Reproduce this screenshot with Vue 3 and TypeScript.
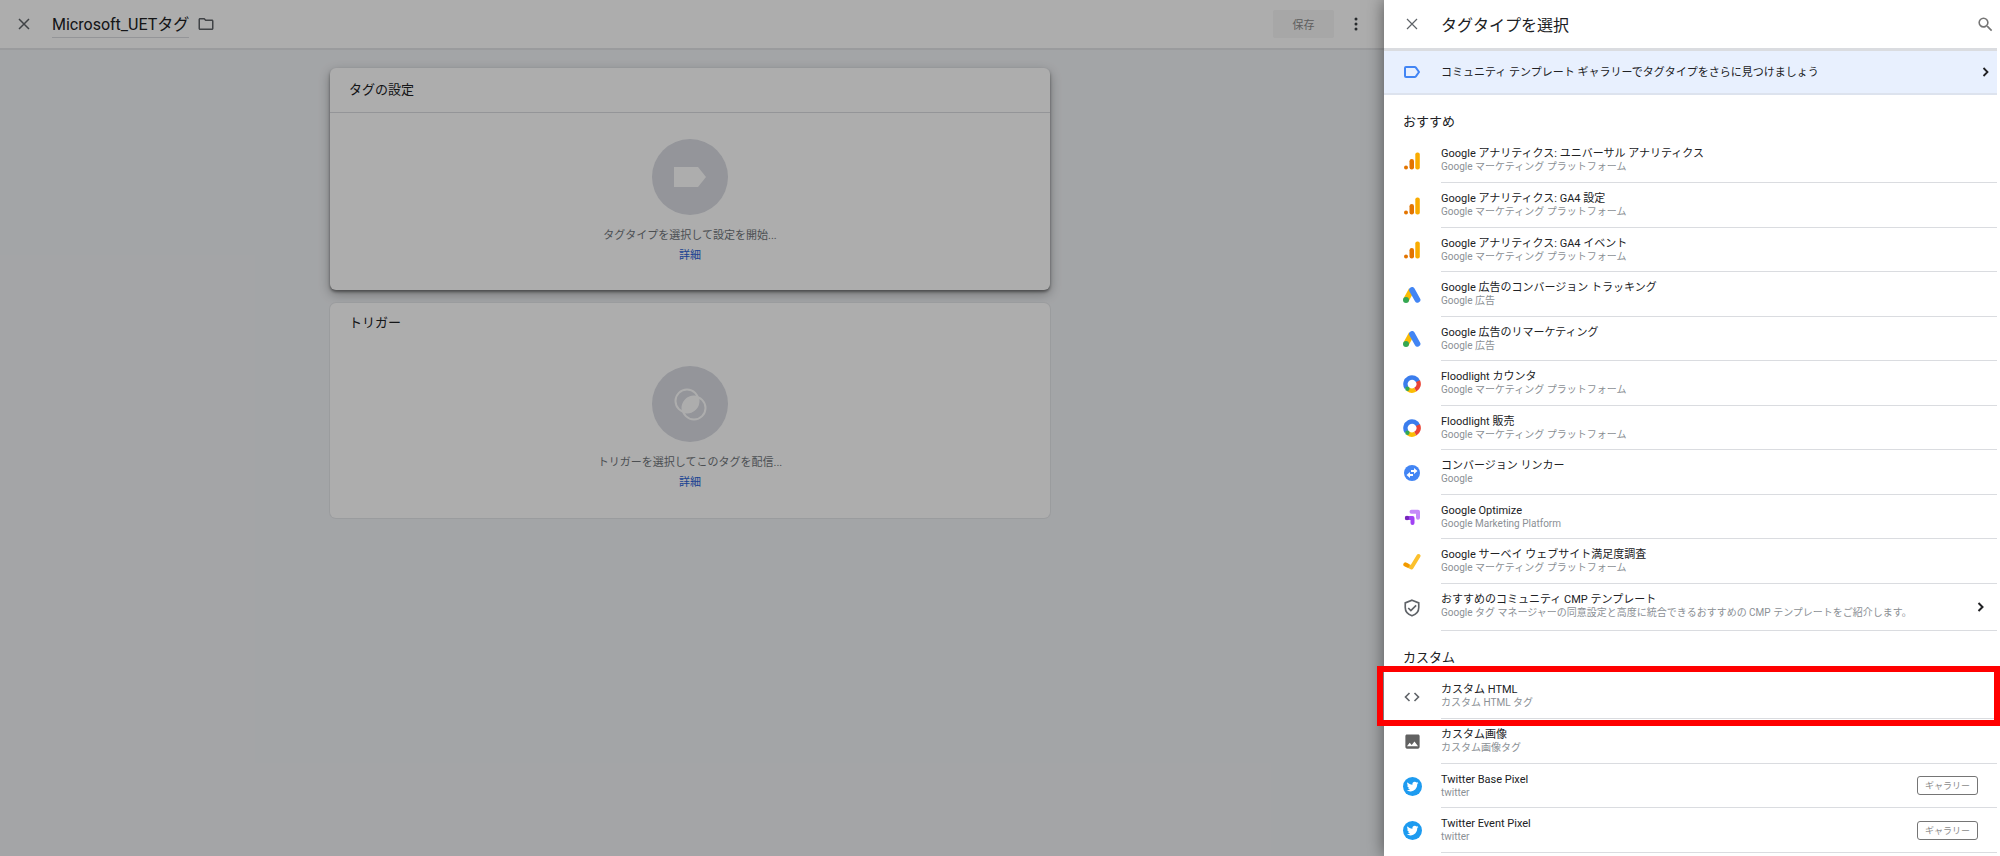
<script setup lang="ts">
import { ref } from 'vue'

type IconName =
  | 'analytics' | 'ads' | 'floodlight' | 'linker' | 'optimize' | 'survey'
  | 'shield' | 'code' | 'image' | 'twitter'

interface TagType {
  icon: IconName
  title: string
  vendor: string
  arrow?: boolean
  gallery?: boolean
  highlighted?: boolean
}

interface Section {
  heading: string
  items: TagType[]
}

const gmp = 'Google マーケティング プラットフォーム'
const tagName = ref('Microsoft_UETタグ')

const sections: Section[] = [
  {
    heading: 'おすすめ',
    items: [
      { icon: 'analytics', title: 'Google アナリティクス: ユニバーサル アナリティクス', vendor: gmp },
      { icon: 'analytics', title: 'Google アナリティクス: GA4 設定', vendor: gmp },
      { icon: 'analytics', title: 'Google アナリティクス: GA4 イベント', vendor: gmp },
      { icon: 'ads', title: 'Google 広告のコンバージョン トラッキング', vendor: 'Google 広告' },
      { icon: 'ads', title: 'Google 広告のリマーケティング', vendor: 'Google 広告' },
      { icon: 'floodlight', title: 'Floodlight カウンタ', vendor: gmp },
      { icon: 'floodlight', title: 'Floodlight 販売', vendor: gmp },
      { icon: 'linker', title: 'コンバージョン リンカー', vendor: 'Google' },
      { icon: 'optimize', title: 'Google Optimize', vendor: 'Google Marketing Platform' },
      { icon: 'survey', title: 'Google サーベイ ウェブサイト満足度調査', vendor: gmp },
      {
        icon: 'shield',
        title: 'おすすめのコミュニティ CMP テンプレート',
        vendor: 'Google タグ マネージャーの同意設定と高度に統合できるおすすめの CMP テンプレートをご紹介します。',
        arrow: true,
      },
    ],
  },
  {
    heading: 'カスタム',
    items: [
      { icon: 'code', title: 'カスタム HTML', vendor: 'カスタム HTML タグ', highlighted: true },
      { icon: 'image', title: 'カスタム画像', vendor: 'カスタム画像タグ' },
      { icon: 'twitter', title: 'Twitter Base Pixel', vendor: 'twitter', gallery: true },
      { icon: 'twitter', title: 'Twitter Event Pixel', vendor: 'twitter', gallery: true },
    ],
  },
]
</script>

<template>
  <div class="app">
    <div class="editor">
      <header class="topbar">
        <button class="icon-btn" type="button" aria-label="閉じる">
          <svg width="12" height="12" viewBox="0 0 12 12"><path d="M1 1l10 10M11 1L1 11" stroke="#5f6368" stroke-width="1.5" /></svg>
        </button>
        <input v-model="tagName" class="tag-name" type="text" aria-label="タグ名" />
        <button class="icon-btn" type="button" aria-label="フォルダ">
          <svg width="18" height="18" viewBox="0 0 24 24"><path fill="#5f6368" d="M9.17 6l2 2H20v10H4V6h5.17M10 4H4c-1.1 0-2 .9-2 2v12c0 1.1.9 2 2 2h16c1.1 0 2-.9 2-2V8c0-1.1-.9-2-2-2h-8l-2-2z" /></svg>
        </button>
        <span class="spacer" />
        <button class="save" type="button" disabled>保存</button>
        <button class="icon-btn" type="button" aria-label="その他">
          <svg width="4" height="14" viewBox="0 0 4 14" fill="#3c4043"><circle cx="2" cy="2" r="1.5" /><circle cx="2" cy="7" r="1.5" /><circle cx="2" cy="12" r="1.5" /></svg>
        </button>
      </header>

      <main class="cards">
        <section class="card raised">
          <h2 class="card-title ruled">タグの設定</h2>
          <div class="card-body">
            <span class="disc">
              <svg width="34" height="20" viewBox="0 0 34 20"><path d="M1 0h24l8 10-8 10H1z" fill="#fff" /></svg>
            </span>
            <p>タグタイプを選択して設定を開始...</p>
            <a href="#">詳細</a>
          </div>
        </section>
        <section class="card">
          <h2 class="card-title">トリガー</h2>
          <div class="card-body">
            <span class="disc">
              <svg width="33" height="33" viewBox="0 0 33 33">
                <circle cx="13" cy="13" r="11.5" fill="none" stroke="#fff" stroke-width="2" />
                <circle cx="20" cy="20" r="11.5" fill="none" stroke="#fff" stroke-width="2" />
                <path d="M8.800 24.200A12 12 0 0 1 24.200 8.800A12 12 0 0 1 8.800 24.200z" fill="#fff" />
              </svg>
            </span>
            <p>トリガーを選択してこのタグを配信...</p>
            <a href="#">詳細</a>
          </div>
        </section>
      </main>
      <div class="scrim" />
    </div>

    <aside class="panel">
      <header class="panel-head">
        <button class="icon-btn lead" type="button" aria-label="閉じる">
          <svg width="12" height="12" viewBox="0 0 12 12"><path d="M1 1l10 10M11 1L1 11" stroke="#5f6368" stroke-width="1.2" /></svg>
        </button>
        <h1>タグタイプを選択</h1>
        <button class="icon-btn search" type="button" aria-label="検索">
          <svg width="19" height="19" viewBox="0 0 24 24"><path fill="#757575" d="M15.5 14h-.79l-.28-.27A6.47 6.47 0 0 0 16 9.5 6.5 6.5 0 1 0 9.5 16c1.61 0 3.09-.59 4.23-1.57l.27.28v.79l5 4.99L20.49 19l-4.99-5zm-6 0C7.01 14 5 11.99 5 9.5S7.01 5 9.5 5 14 7.01 14 9.5 11.99 14 9.5 14z" /></svg>
        </button>
      </header>

      <button class="promo" type="button">
        <span class="lead">
          <svg width="16" height="12" viewBox="0 0 16 12"><path d="M2 1h8.600q.8 0 1.300.6L15 6l-3.100 4.400q-.5.6-1.300.6H2q-1 0-1-1V2q0-1 1-1z" fill="none" stroke="#4285f4" stroke-width="2" /></svg>
        </span>
        <span class="promo-text">コミュニティ テンプレート ギャラリーでタグタイプをさらに見つけましょう</span>
        <svg class="promo-arrow" width="8" height="10" viewBox="0 0 8 10"><path d="M1.500 1l4 4-4 4" fill="none" stroke="#202124" stroke-width="1.800" /></svg>
      </button>

      <section v-for="section in sections" :key="section.heading">
        <h2 class="section-title">{{ section.heading }}</h2>
        <ul class="types">
          <li v-for="item in section.items" :key="item.title" :class="{ wide: item.arrow }">
            <button class="type" type="button">
              <span class="lead">
                <svg v-if="item.icon === 'analytics'" width="16" height="18" viewBox="0 0 16 18">
                  <circle cx="2" cy="15.500" r="2" fill="#e37400" />
                  <rect x="5.500" y="7" width="4.500" height="10.500" rx="2.200" fill="#e37400" />
                  <rect x="11.300" y="0.500" width="4.500" height="17" rx="2" fill="#f9ab00" />
                </svg>
                <svg v-else-if="item.icon === 'ads'" width="18" height="16" viewBox="0 0 18 16">
                  <path d="M3 13L8.500 3" stroke="#fbbc04" stroke-width="5.800" />
                  <path d="M9 3l5.500 9.800" stroke="#4285f4" stroke-width="5.800" stroke-linecap="round" />
                  <circle cx="3" cy="13" r="3" fill="#34a853" />
                </svg>
                <svg v-else-if="item.icon === 'floodlight'" width="18" height="18" viewBox="0 0 18 18" fill="none" stroke-width="4.400">
                  <path d="M12.300 14.700A6.600 6.600 0 0 1 5 14.200" stroke="#fbbc04" />
                  <path d="M3.600 12.800A6.600 6.600 0 1 1 15.200 6.700" stroke="#3b7ded" />
                  <path d="M15 6.100A6.600 6.600 0 0 1 12.300 14.700" stroke="#ea4335" />
                  <circle cx="4.400" cy="13.700" r="2.200" fill="#34a853" stroke="none" />
                </svg>
                <svg v-else-if="item.icon === 'linker'" width="16" height="16" viewBox="0 0 16 16">
                  <circle cx="8" cy="8" r="8" fill="#4285f4" />
                  <path d="M7 5h3V3l3.500 3L10 9V7H7z" fill="#fff" />
                  <path d="M9 9H6V7L2.500 10 6 13v-2h3z" fill="#fff" />
                </svg>
                <svg v-else-if="item.icon === 'optimize'" width="17" height="17" viewBox="0 0 17 17" fill="none" stroke-width="4" stroke-linejoin="round">
                  <path d="M7.500 2.700H14v6" stroke="#c58af9" stroke-linecap="round" />
                  <path d="M3 9h5.500v5" stroke="#a142f4" stroke-linecap="round" />
                  <circle cx="3" cy="9" r="2.200" fill="#7627bb" stroke="none" />
                </svg>
                <svg v-else-if="item.icon === 'survey'" width="18" height="18" viewBox="0 0 18 18" fill="none" stroke-width="4" stroke-linecap="round" stroke-linejoin="round">
                  <path d="M2.500 11.500L8.500 14.500 15.500 3" stroke="#fbc02d" />
                  <path d="M2.500 11.500L4.500 12.500" stroke="#f29900" />
                </svg>
                <svg v-else-if="item.icon === 'shield'" width="18" height="18" viewBox="0 0 24 24" fill="none" stroke="#5f6368" stroke-width="2.200">
                  <path d="M12 1.600l9 3.600v6.200c0 4.900-3.600 9.300-9 11-5.400-1.700-9-6.100-9-11V5.200z" /><path d="M7 12l3.500 3.500L17.500 8.500" />
                </svg>
                <svg v-else-if="item.icon === 'code'" width="16" height="10" viewBox="0 0 16 10" fill="none" stroke="#5f6368" stroke-width="1.600">
                  <path d="M5.500 1l-4 4 4 4M10.500 1l4 4-4 4" />
                </svg>
                <svg v-else-if="item.icon === 'image'" width="19" height="19" viewBox="0 0 24 24">
                  <path fill="#616161" d="M21 19V5c0-1.100-.9-2-2-2H5c-1.100 0-2 .9-2 2v14c0 1.100.9 2 2 2h14c1.100 0 2-.9 2-2zM8.500 13.500l2.500 3.010L14.500 12l4.500 6H5l3.500-4.500z" />
                </svg>
                <svg v-else width="19" height="19" viewBox="0 0 24 24">
                  <circle cx="12" cy="12" r="12" fill="#1d9bf0" />
                  <path transform="translate(4.600 4.700) scale(.62)" fill="#fff" d="M23.950 4.570a10 10 0 0 1-2.820.77 4.960 4.960 0 0 0 2.160-2.720c-.95.550-2 .95-3.130 1.180a4.920 4.920 0 0 0-8.380 4.480C7.690 8.100 4.070 6.130 1.640 3.160a4.920 4.920 0 0 0 1.520 6.570 4.900 4.900 0 0 1-2.230-.61v.06a4.920 4.920 0 0 0 3.950 4.830 5 5 0 0 1-2.210.08 4.940 4.940 0 0 0 4.600 3.420A9.870 9.870 0 0 1 0 19.540a14 14 0 0 0 7.550 2.210c9.050 0 14-7.500 14-13.980 0-.21 0-.42-.02-.63a9.940 9.940 0 0 0 2.420-2.570z" />
                </svg>
              </span>
              <span class="type-main">
                <span class="type-text">
                  <span class="type-title">{{ item.title }}</span>
                  <span class="type-vendor">{{ item.vendor }}</span>
                </span>
                <svg v-if="item.arrow" class="type-arrow" width="8" height="10" viewBox="0 0 8 10"><path d="M1.500 1l4 4-4 4" fill="none" stroke="#202124" stroke-width="2" /></svg>
                <span v-if="item.gallery" class="chip">ギャラリー</span>
              </span>
            </button>
            <span v-if="item.highlighted" class="marker" />
          </li>
        </ul>
      </section>
    </aside>
  </div>
</template>

<style>
body {
  margin: 0;
  overflow: hidden;
}
</style>

<style scoped>
.app {
  display: flex;
  height: 100vh;
  overflow: hidden;
  background: #fff;
  color: #202124;
  font-family: Roboto, "Noto Sans CJK JP", sans-serif;
  font-size: 11px;
}

button,
input {
  font: inherit;
  color: inherit;
  border: 0;
  padding: 0;
  margin: 0;
  background: none;
  text-align: left;
}

h1,
h2,
p,
ul {
  margin: 0;
  padding: 0;
  font-weight: 400;
}

svg {
  display: block;
}

.icon-btn {
  display: flex;
  align-items: center;
  justify-content: center;
}

.editor {
  position: relative;
  flex: 1;
  min-width: 0;
  background: #f1f3f6;
}

.topbar {
  display: flex;
  align-items: center;
  height: 48px;
  padding: 0 26px 0 18px;
  background: #fff;
  border-bottom: 2px solid #e3e5e8;
}

.tag-name {
  field-sizing: content;
  height: 25px;
  margin: 0 8px 0 22px;
  padding-bottom: 2px;
  border-bottom: 1px solid #dadce0;
  font-size: 16px;
}

.spacer {
  flex: 1;
}

.save {
  width: 61px;
  height: 28px;
  margin-right: 20px;
  border-radius: 2px;
  background: #f6f6f6;
  color: #8c8c8c;
  text-align: center;
}

.cards {
  display: flex;
  flex-direction: column;
  gap: 13px;
  max-width: 720px;
  margin: 0 auto;
  padding: 18px 4px 0 0;
}

.card {
  border-radius: 6px;
  background: #fff;
  box-shadow: 0 0 0 1px #e4e6e9;
}

.card.raised {
  box-shadow: 0 2px 3px rgba(0, 0, 0, .4), 0 4px 12px rgba(0, 0, 0, .3);
}

.card-title {
  padding: 0 19px;
  font-size: 13px;
  line-height: 40px;
}

.card-title.ruled {
  line-height: 44px;
  border-bottom: 1px solid #dadce0;
}

.card-body {
  display: flex;
  flex-direction: column;
  align-items: center;
  padding: 23px 0 25px;
  line-height: 20px;
}

.raised .card-body {
  padding: 26px 0 24px;
}

.disc {
  display: flex;
  align-items: center;
  justify-content: center;
  width: 76px;
  height: 76px;
  margin-bottom: 11px;
  border-radius: 50%;
  background: #dadce3;
}

.card-body p {
  color: #70757a;
}

.card-body a {
  color: #2a62d8;
  text-decoration: none;
}

.scrim {
  position: absolute;
  inset: 0;
  background: rgba(0, 0, 0, .32);
}

.panel {
  position: relative;
  width: 616px;
  box-sizing: border-box;
  padding-right: 3px;
  background: #fff;
  box-shadow: 0 0 16px rgba(0, 0, 0, .5);
}

.lead {
  display: flex;
  align-items: center;
  justify-content: center;
  flex: none;
  width: 24px;
  margin: 0 17px 0 16px;
}

.panel-head {
  display: flex;
  align-items: center;
  height: 48px;
  border-bottom: 3px solid #dadce0;
}

.panel-head h1 {
  flex: 1;
  font-size: 16px;
}

.search {
  margin-right: 2px;
}

.promo {
  display: flex;
  align-items: center;
  width: 100%;
  height: 44px;
  border-bottom: 2px solid #dde3ee;
  background: #e8f0fe;
}

.promo-text {
  flex: 1;
  padding-bottom: 2px;
}

.promo-arrow {
  margin-right: 7px;
}

.section-title {
  padding: 11px 0 0 19px;
  font-size: 13px;
  line-height: 32px;
}

.types {
  list-style: none;
}

.types li {
  position: relative;
  height: 45px;
}

.types li:nth-child(2n + 3) {
  height: 44px;
}

.types li.wide {
  height: 47px;
}

.type {
  display: flex;
  align-items: center;
  width: 100%;
  height: 100%;
}

.type-main {
  display: flex;
  align-items: center;
  flex: 1;
  height: 100%;
  box-sizing: border-box;
  border-bottom: 1px solid #dadce0;
}

.type-text {
  display: flex;
  flex-direction: column;
  flex: 1;
  align-self: flex-start;
  padding-top: 9px;
}

.type-title {
  line-height: 14px;
}

.type-vendor {
  color: #8b9095;
  font-size: 10px;
  line-height: 12px;
}

.type-arrow {
  margin-right: 12px;
}

.chip {
  box-sizing: border-box;
  width: 61px;
  height: 19px;
  margin-right: 19px;
  border: 1px solid #757575;
  border-radius: 3px;
  color: #8a8a8a;
  font-size: 9px;
  line-height: 18px;
  text-align: center;
}

.marker {
  position: absolute;
  inset: -8px -3px -7px -7px;
  border: 6px solid #f00;
  pointer-events: none;
}
</style>
